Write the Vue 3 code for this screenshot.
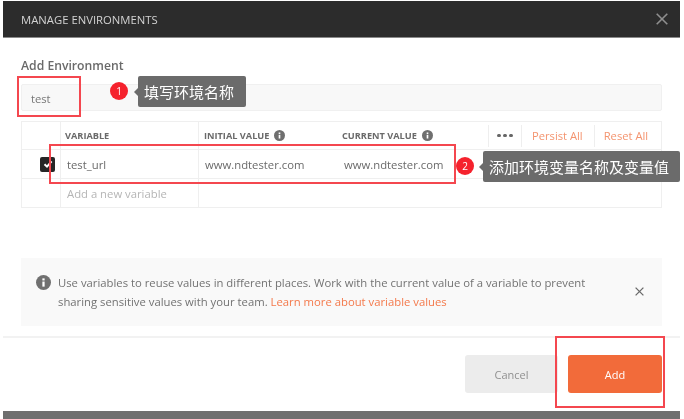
<script setup>
const columns = [
  { label: 'VARIABLE', info: false, cls: 'col-var' },
  { label: 'INITIAL VALUE', info: true, cls: 'col-init' },
  { label: 'CURRENT VALUE', info: true, cls: 'col-cur' }
]
</script>

<template>
  <div class="page">
    <div class="modal">
      <header class="bar">
        <span class="bar-title">MANAGE ENVIRONMENTS</span>
        <svg class="bar-close" width="12" height="12" viewBox="0 0 12 12"><path d="M.7.7l10.6 10.6M11.3.7.7 11.3" stroke="#8f8f8f" stroke-width="1.6" fill="none"/></svg>
      </header>

      <main class="body">
        <h2 class="heading">Add Environment</h2>
        <div class="name-input">test</div>

        <div class="table">
          <div class="row head">
            <div class="cell col-check"></div>
            <div v-for="c in columns" :key="c.label" class="cell" :class="c.cls">
              {{ c.label }}
              <svg v-if="c.info" class="info" width="11" height="11" viewBox="0 0 16 16"><circle cx="8" cy="8" r="8" fill="#6f6f6f"/><rect x="6.8" y="7" width="2.4" height="5.4" fill="#fff"/><rect x="6.8" y="3.6" width="2.4" height="2.2" fill="#fff"/></svg>
            </div>
            <div class="actions">
              <span class="dots"><i></i><i></i><i></i></span>
              <span class="action">Persist All</span>
              <span class="action">Reset All</span>
            </div>
          </div>
          <div class="row">
            <div class="cell col-check">
              <span class="checkbox">
                <svg width="10" height="10" viewBox="0 0 10 10"><path d="M1.5 5.2 4 7.6 8.6 2.4" stroke="#fff" stroke-width="2" fill="none"/></svg>
              </span>
            </div>
            <div class="cell col-var value">test_url</div>
            <div class="cell col-init value">www.ndtester.com</div>
            <div class="cell col-cur value">www.ndtester.com</div>
          </div>
          <div class="row last">
            <div class="cell col-check"></div>
            <div class="cell col-var placeholder">Add a new variable</div>
          </div>
        </div>

        <div class="notice">
          <svg class="notice-icon" width="15" height="15" viewBox="0 0 16 16"><circle cx="8" cy="8" r="8" fill="#707070"/><rect x="6.8" y="7" width="2.4" height="5.4" fill="#fff"/><rect x="6.8" y="3.6" width="2.4" height="2.2" fill="#fff"/></svg>
          <p class="notice-text">Use variables to reuse values in different places. Work with the current value of a variable to prevent<br>sharing sensitive values with your team. <a class="link">Learn more about variable values</a></p>
          <svg class="notice-close" width="9" height="9" viewBox="0 0 9 9"><path d="M.6.6l7.8 7.8M8.4.6.6 8.4" stroke="#6a6a6a" stroke-width="1.3" fill="none"/></svg>
        </div>
      </main>

      <footer class="foot">
        <button class="btn cancel">Cancel</button>
        <button class="btn add">Add</button>
      </footer>
      <div class="under"></div>
    </div>

    <div class="mark mark-name"></div>
    <div class="mark mark-row"></div>
    <div class="mark mark-add"></div>

    <span class="badge badge-1">1</span>
    <div class="tip tip-1">填写环境名称</div>
    <span class="badge badge-2">2</span>
    <div class="tip tip-2">添加环境变量名称及变量值</div>
  </div>
</template>

<style scoped>
.page {
  position: relative;
  width: 684px;
  height: 419px;
  overflow: hidden;
  background: #fff;
  font-family: "Open Sans", "Noto Sans CJK SC", sans-serif;
  filter: blur(0.6px);
}
.modal {
  margin: 1px 4px 0 3px;
  height: 418px;
  display: flex;
  flex-direction: column;
}
.bar {
  height: 36px;
  flex: none;
  display: flex;
  align-items: center;
  justify-content: space-between;
  padding: 0 12px 0 18px;
  background: #2c2c2c;
  border-bottom: 1px solid #8a8a8a;
}
.bar-title {
  font-size: 11.3px;
  font-weight: 500;
  color: #d2d2d2;
}
.body {
  flex: none;
  padding: 0 18px;
  display: flex;
  flex-direction: column;
}
.heading {
  margin: 19px 0 0;
  height: 18px;
  line-height: 18px;
  font-size: 12.2px;
  font-weight: 600;
  color: #6a6a6a;
}
.name-input {
  margin-top: 9px;
  height: 27px;
  line-height: 27px;
  padding-left: 9px;
  box-sizing: border-box;
  background: #f8f8f8;
  border: 1px solid #f0f0f0;
  border-radius: 2px;
  font-size: 11.2px;
  color: #777;
}
.table {
  margin-top: 10px;
  height: 87px;
  box-sizing: border-box;
  border: 1px solid #efefef;
  display: flex;
  flex-direction: column;
}
.row {
  display: flex;
  height: 29px;
  flex: none;
  box-sizing: border-box;
  border-bottom: 1px solid #efefef;
}
.row.head { height: 28px; }
.row.last { border-bottom: none; }
.cell {
  box-sizing: border-box;
  display: flex;
  align-items: center;
  border-right: 1px solid #efefef;
  font-size: 11.3px;
  white-space: nowrap;
}
.col-check { width: 39px; justify-content: flex-end; padding-right: 5px; }
.col-var { width: 138px; padding-left: 4px; }
.col-init { width: 138px; padding-left: 5px; border-right: none; }
.col-cur { width: 151px; padding-left: 5px; border-right: none; }
.head .cell { font-size: 9.2px; font-weight: 700; color: #6a6a6a; }
.head .col-check { padding: 0; }
.info { margin-left: 5px; }
.actions {
  flex: 1;
  display: flex;
  align-items: center;
  font-size: 11.2px;
  color: #f4946f;
}
.dots {
  width: 34px;
  box-sizing: border-box;
  height: 22px;
  display: flex;
  align-items: center;
  justify-content: center;
  gap: 2.5px;
  border-left: 1px solid #eee;
  border-right: 1px solid #eee;
}
.dots i {
  width: 3.5px;
  height: 3.5px;
  border-radius: 50%;
  background: #666;
}
.action { height: 22px; line-height: 22px; padding: 0 11px 0 10px; white-space: nowrap; }
.action + .action { border-left: 1px solid #eee; padding: 0 0 0 9px; }
.checkbox {
  width: 15px;
  height: 15px;
  border-radius: 2px;
  background: #262626;
  display: flex;
  align-items: center;
  justify-content: center;
}
.value { color: #6a6a6a; padding-left: 6px; }
.col-cur.value { padding-left: 7px; }
.placeholder { color: #b5b5b5; padding-left: 6px; border-right: 1px solid #efefef; }
.notice {
  margin-top: 50px;
  height: 68px;
  box-sizing: border-box;
  background: #f9f9f9;
  display: flex;
  align-items: flex-start;
  padding: 17px 0 0 15px;
}
.notice-icon { flex: none; margin-right: 7px; }
.notice-text {
  margin: -2px 0 0;
  flex: 1;
  font-size: 11.3px;
  line-height: 19px;
  color: #727272;
  white-space: nowrap;
}
.link { color: #f4794b; }
.notice-close { flex: none; margin: 12px 18px 0 0; }
.foot {
  flex: none;
  margin-top: 10px;
  height: 75px;
  box-sizing: border-box;
  border-top: 2px solid #f2f2f2;
  display: flex;
  justify-content: flex-end;
  gap: 10px;
  padding: 17px 18px 0 0;
}
.btn {
  height: 38px;
  width: 94px;
  border: none;
  border-radius: 3px;
  font-family: inherit;
  font-size: 11px;
  font-weight: 500;
  padding: 0;
}
.cancel { background: #ececec; color: #909090; width: 93px; }
.add { background: #f26b3a; color: #fff; }
.under {
  flex: 1;
  background: #6f6f6f;
}
.mark {
  position: absolute;
  box-sizing: border-box;
  border: 2px solid #f4474f;
}
.mark-name { left: 17px; top: 76px; width: 64px; height: 41px; }
.mark-row { left: 49px; top: 144px; width: 407px; height: 40px; }
.mark-add { left: 555px; top: 336px; width: 110px; height: 72px; }
.badge {
  position: absolute;
  width: 18px;
  height: 18px;
  border-radius: 50%;
  background: #f5222d;
  color: #fff;
  font-size: 10px;
  line-height: 18px;
  text-align: center;
}
.badge-1 { left: 110px; top: 82px; }
.badge-2 { left: 456px; top: 157px; }
.tip {
  position: absolute;
  box-sizing: border-box;
  padding-left: 6px;
  background: #6b6b6b;
  color: #fff;
  font-size: 15px;
  border-radius: 2px;
  display: flex;
  align-items: center;
  white-space: nowrap;
}
.tip::before {
  content: "";
  position: absolute;
  left: -4px;
  top: 50%;
  margin-top: -4px;
  border-style: solid;
  border-width: 4px 4px 4px 0;
  border-color: transparent #6b6b6b transparent transparent;
}
.tip-1 { left: 138px; top: 76px; width: 108px; height: 31px; }
.tip-2 { left: 483px; top: 151px; width: 197px; height: 31px; }
</style>
